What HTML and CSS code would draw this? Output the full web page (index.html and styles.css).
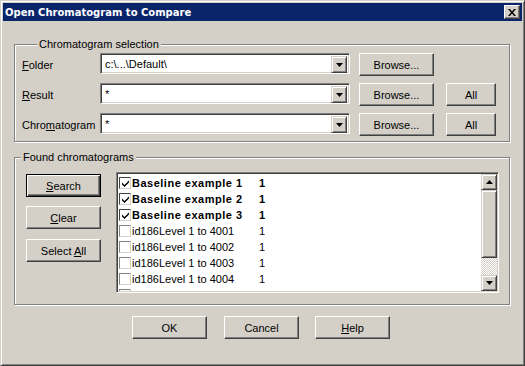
FILE: index.html
```html
<!DOCTYPE html>
<html>
<head>
<meta charset="utf-8">
<link rel="stylesheet" href="styles.css">
</head>
<body>
<div class="window">
  <div class="titlebar">
    <span class="title">Open Chromatogram to Compare</span>
    <span class="close"><svg width="8" height="7" viewBox="0 0 8 7"><path d="M0 0h2l2 2.4 2-2.4h2l-3 3.5 3 3.5h-2l-2-2.4-2 2.4h-2l3-3.5z" fill="#000"/></svg></span>
  </div>
  <div class="body">
    <div class="group g1">
      <span class="caption">Chromatogram selection</span>
      <div class="row">
        <span class="lbl"><u>F</u>older</span>
        <div class="combo"><span class="ctext">c:\...\Default\</span><span class="dd"><svg width="7" height="4" viewBox="0 0 7 4"><path d="M0 0h7l-3.5 4z" fill="#000"/></svg></span></div>
        <button class="btn browse">Browse...</button>
      </div>
      <div class="row">
        <span class="lbl"><u>R</u>esult</span>
        <div class="combo"><span class="ctext">*</span><span class="dd"><svg width="7" height="4" viewBox="0 0 7 4"><path d="M0 0h7l-3.5 4z" fill="#000"/></svg></span></div>
        <button class="btn browse">Browse...</button>
        <button class="btn all">All</button>
      </div>
      <div class="row">
        <span class="lbl">Chro<u>m</u>atogram</span>
        <div class="combo"><span class="ctext">*</span><span class="dd"><svg width="7" height="4" viewBox="0 0 7 4"><path d="M0 0h7l-3.5 4z" fill="#000"/></svg></span></div>
        <button class="btn browse">Browse...</button>
        <button class="btn all">All</button>
      </div>
    </div>
    <div class="group g2">
      <span class="caption">Found chromatograms</span>
      <div class="side">
        <button class="btn default"><u>S</u>earch</button>
        <button class="btn"><u>C</u>lear</button>
        <button class="btn">Select <u>A</u>ll</button>
      </div>
      <div class="listbox">
        <div class="items">
          <div class="item bold"><span class="cb on"><svg width="7" height="7" viewBox="0 0 7 7"><path d="M0 2.5l2.5 2.5 4.5-4.5v2l-4.5 4.5-2.5-2.5z" fill="#000"/></svg></span><span class="name">Baseline example 1</span><span class="num">1</span></div>
          <div class="item bold"><span class="cb on"><svg width="7" height="7" viewBox="0 0 7 7"><path d="M0 2.5l2.5 2.5 4.5-4.5v2l-4.5 4.5-2.5-2.5z" fill="#000"/></svg></span><span class="name">Baseline example 2</span><span class="num">1</span></div>
          <div class="item bold"><span class="cb on"><svg width="7" height="7" viewBox="0 0 7 7"><path d="M0 2.5l2.5 2.5 4.5-4.5v2l-4.5 4.5-2.5-2.5z" fill="#000"/></svg></span><span class="name">Baseline example 3</span><span class="num">1</span></div>
          <div class="item"><span class="cb"></span><span class="name">id186Level 1 to 4001</span><span class="num">1</span></div>
          <div class="item"><span class="cb"></span><span class="name">id186Level 1 to 4002</span><span class="num">1</span></div>
          <div class="item"><span class="cb"></span><span class="name">id186Level 1 to 4003</span><span class="num">1</span></div>
          <div class="item"><span class="cb"></span><span class="name">id186Level 1 to 4004</span><span class="num">1</span></div>
          <div class="item"><span class="cb"></span><span class="name short">id2301</span><span class="num">1</span></div>
        </div>
        <div class="vscroll">
          <span class="sbtn"><svg width="7" height="4" viewBox="0 0 7 4"><path d="M0 4h7l-3.5-4z" fill="#000"/></svg></span>
          <span class="thumb"></span>
          <span class="track"></span>
          <span class="sbtn"><svg width="7" height="4" viewBox="0 0 7 4"><path d="M0 0h7l-3.5 4z" fill="#000"/></svg></span>
        </div>
      </div>
    </div>
    <div class="footer">
      <button class="btn">OK</button>
      <button class="btn">Cancel</button>
      <button class="btn"><u>H</u>elp</button>
    </div>
  </div>
</div>
</body>
</html>
```
FILE: styles.css
```css
* { box-sizing: border-box; }
html, body { margin: 0; padding: 0; background: #D4D0C8; }
body { font-family: "Liberation Sans", Arial, sans-serif; font-size: 11px; color: #000; }

.window {
  width: 525px; height: 366px;
  background: #D4D0C8;
  border: 1px solid; border-color: #D4D0C8 #404040 #404040 #D4D0C8;
  box-shadow: inset 1px 1px #fff, inset -1px -1px #808080;
  padding: 2px;
  display: flex; flex-direction: column;
}

.titlebar {
  height: 18px; background: #0A246A; color: #fff;
  display: flex; align-items: center; justify-content: space-between;
  padding: 0 2px 0 2px;
}
.title { font-family: "DejaVu Sans", Tahoma, sans-serif; font-weight: bold; font-size: 10px; }
.close {
  width: 16px; height: 14px; background: #D4D0C8;
  border: 1px solid; border-color: #fff #404040 #404040 #fff;
  box-shadow: inset -1px -1px #808080;
  display: flex; align-items: center; justify-content: center;
}
.close svg { display: block; margin-left: -1px; }

.body { flex: 1; padding: 23px 10px 0 11px; display: flex; flex-direction: column; }

.group {
  position: relative;
  border: 1px solid #808080;
  box-shadow: inset 1px 1px #fff, 1px 1px #fff;
  width: 496px;
}
.caption {
  position: absolute; top: -7px; left: 22px;
  background: #D4D0C8; padding: 0 2px; line-height: 13px;
}
.g2 .caption { left: 6px; }

.g1 { height: 98px; padding: 8px 0 0 7px; display: flex; flex-direction: column; gap: 9px; }
.row { display: flex; align-items: flex-start; height: 21px; }
.lbl { width: 78px; line-height: 21px; padding-top: 2px; }
.combo {
  width: 250px; height: 21px; background: #fff;
  border: 1px solid; border-color: #808080 #fff #fff #808080;
  box-shadow: inset 1px 1px #404040, inset -1px -1px #D4D0C8;
  display: flex; padding: 2px;
}
.ctext { flex: 1; padding-left: 2px; line-height: 17px; }
.dd {
  width: 16px; height: 17px; background: #D4D0C8;
  border: 1px solid; border-color: #D4D0C8 #404040 #404040 #D4D0C8;
  box-shadow: inset 1px 1px #fff, inset -1px -1px #808080;
  display: flex; align-items: center; justify-content: center;
}
.dd svg { display: block; }

.btn {
  font: inherit; color: #000; background: #D4D0C8;
  width: 75px; height: 23px; padding: 0; margin: 0;
  border: 1px solid; border-color: #fff #404040 #404040 #fff;
  box-shadow: inset -1px -1px #808080;
  text-align: center;
}
.btn.default {
  border-color: #000;
  box-shadow: inset 1px 1px #fff, inset -1px -1px #404040, inset -2px -2px #808080;
}
.browse { margin-left: 9px; }
.all { width: 50px; margin-left: 12px; }

.g1 + .g2 { margin-top: 15px; }
.g2 { height: 148px; display: flex; padding: 14px 0 0 11px; align-items: flex-start; }
.side { display: flex; flex-direction: column; gap: 9px; margin-top: 2px; width: 75px; }
.side .btn:last-child { margin-top: 1px; }

.listbox {
  margin-left: 15px;
  width: 383px; height: 121px; background: #fff;
  border: 1px solid; border-color: #808080 #fff #fff #808080;
  box-shadow: inset 1px 1px #404040, inset -1px -1px #D4D0C8;
  padding: 1px; display: flex;
}
.items { flex: 1; overflow: hidden; padding-top: 1px; }
.item { display: flex; align-items: center; height: 16px; white-space: nowrap; }
.cb {
  width: 12px; height: 12px; margin-left: 1px; margin-right: 1px; background: #fff;
  border: 1px solid; border-color: #808080 #D4D0C8 #D4D0C8 #808080;
  display: flex; align-items: center; justify-content: center;
}
.cb.on { border-color: #404040 #D4D0C8 #D4D0C8 #404040; }
.cb svg { display: block; }
.name { width: 127px; }
.name.short { width: 53px; }
.bold .name, .bold .num { font-weight: bold; letter-spacing: 0.5px; }

.vscroll { width: 16px; display: flex; flex-direction: column; }
.sbtn, .thumb {
  background: #D4D0C8;
  border: 1px solid; border-color: #D4D0C8 #404040 #404040 #D4D0C8;
  box-shadow: inset 1px 1px #fff, inset -1px -1px #808080;
}
.sbtn { height: 16px; display: flex; align-items: center; justify-content: center; }
.sbtn svg { display: block; }
.thumb { height: 68px; }
.track {
  flex: 1;
  background-image: repeating-conic-gradient(#fff 0 25%, #D4D0C8 0 50%);
  background-size: 2px 2px;
}

.footer { display: flex; gap: 16px; padding-left: 118px; margin-top: 11px; }
.footer .btn:nth-child(2) { margin-left: 1px; }
```
